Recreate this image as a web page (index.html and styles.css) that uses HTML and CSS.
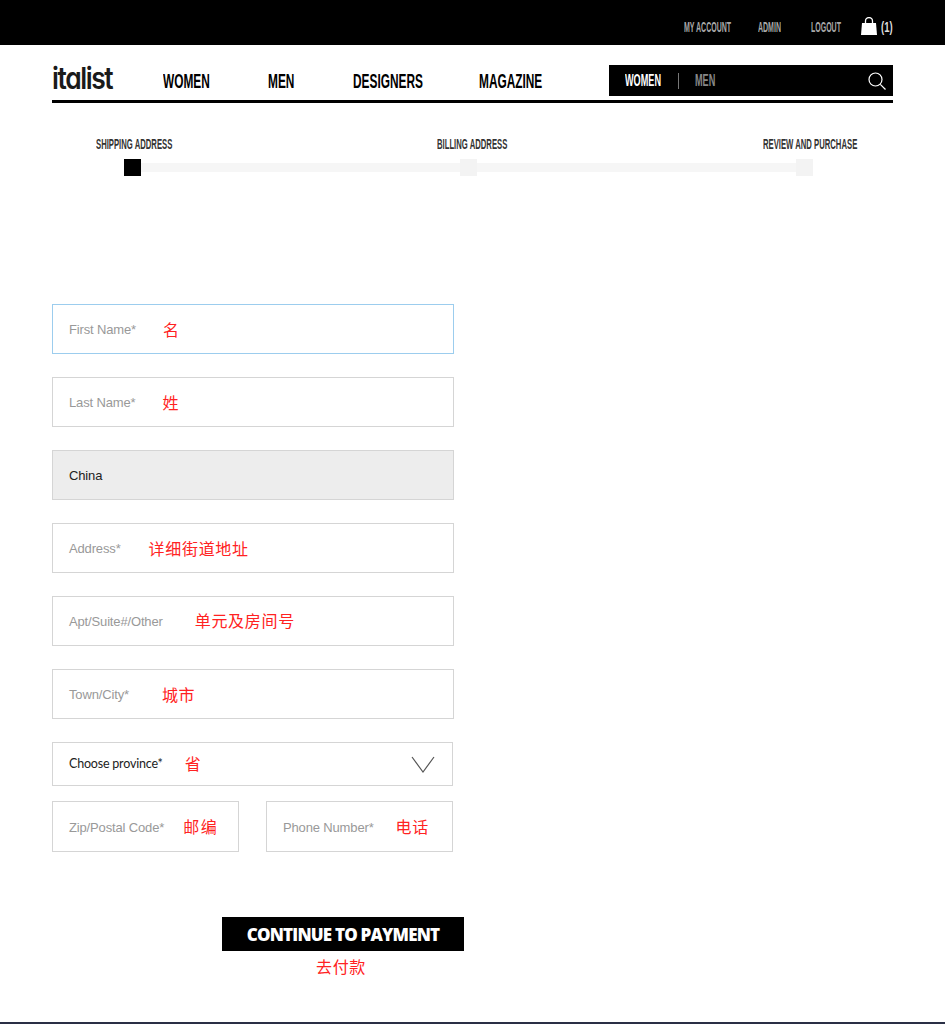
FILE: index.html
```html
<!DOCTYPE html>
<html lang="en">
<head>
    <meta charset="UTF-8">
    <meta name="viewport" content="width=device-width, initial-scale=1.0">
    <title>italist - Checkout</title>
    <link rel="stylesheet" href="styles.css">
</head>
<body>
    <div class="topbar">
        <a href="#" class="top-link">MY ACCOUNT</a>
        <a href="#" class="top-link">ADMIN</a>
        <a href="#" class="top-link">LOGOUT</a>
        <svg class="bag" width="16" height="18" viewBox="0 0 16 18">
            <path d="M1 6h14l1 12H0z" fill="#fff"/>
            <path d="M4.5 6.5V4a3.5 3.5 0 0 1 7 0v2.5" fill="none" stroke="#fff" stroke-width="1.3"/>
        </svg>
        <span class="top-link cart-count">(1)</span>
    </div>

    <header>
        <a href="#" class="logo">italist</a>
        <nav>
            <a href="#">WOMEN</a>
            <a href="#">MEN</a>
            <a href="#">DESIGNERS</a>
            <a href="#">MAGAZINE</a>
        </nav>
        <div class="search">
            <span class="search-word search-women">WOMEN</span>
            <span class="search-sep"></span>
            <span class="search-word search-men">MEN</span>
            <svg class="search-icon" width="18" height="18" viewBox="0 0 18 18">
                <circle cx="7.5" cy="7.5" r="6.5" fill="none" stroke="#fff" stroke-width="1.2"/>
                <path d="M12.3 12.3L17.5 17.5" stroke="#fff" stroke-width="1.2"/>
            </svg>
        </div>
    </header>

    <div class="steps">
        <div class="step-labels">
            <span>SHIPPING ADDRESS</span>
            <span>BILLING ADDRESS</span>
            <span>REVIEW AND PURCHASE</span>
        </div>
        <div class="track">
            <span class="dot active"></span>
            <span class="dot"></span>
            <span class="dot"></span>
        </div>
    </div>

    <main>
        <form class="address-form">
            <div class="field focused"><span class="label">First Name*</span><span class="note">名</span></div>
            <div class="field"><span class="label">Last Name*</span><span class="note">姓</span></div>
            <div class="field disabled"><span class="label">China</span></div>
            <div class="field"><span class="label">Address*</span><span class="note note-mid">详细街道地址</span></div>
            <div class="field"><span class="label">Apt/Suite#/Other</span><span class="note note-apt">单元及房间号</span></div>
            <div class="field"><span class="label">Town/City*</span><span class="note note-wide">城市</span></div>
            <div class="field select">
                <span class="label">Choose province*</span><span class="note note-tight">省</span>
                <svg class="chevron" width="24" height="17" viewBox="0 0 24 17">
                    <path d="M1 1l11 15L23 1" fill="none" stroke="#555" stroke-width="1.2"/>
                </svg>
            </div>
            <div class="field-row">
                <div class="field short"><span class="label">Zip/Postal Code*</span><span class="note note-zip">邮编</span></div>
                <div class="field short"><span class="label">Phone Number*</span><span class="note note-tight">电话</span></div>
            </div>
            <div class="submit">
                <button type="button">CONTINUE TO PAYMENT</button>
                <span class="note submit-note">去付款</span>
            </div>
        </form>
    </main>

    <footer></footer>
</body>
</html>
```

FILE: styles.css
```css
* {
    margin: 0;
    padding: 0;
    box-sizing: border-box;
}

body {
    font-family: 'Liberation Sans', Arial, sans-serif;
    background: #fff;
    color: #000;
    height: 1024px;
    overflow: hidden;
    display: flex;
    flex-direction: column;
}

a {
    color: inherit;
    text-decoration: none;
}

/* no condensed face is installed, so the display text is squeezed */
.top-link,
nav a,
.search-word,
.step-labels span {
    display: inline-block;
    font-weight: bold;
    white-space: nowrap;
    transform-origin: left center;
}

.topbar {
    background: #000;
    height: 45px;
    padding: 0 52px 0 684px;
    display: grid;
    grid-template-columns: 74px 53px 50px 20px 1fr;
    align-items: center;
    color: #a8a8a8;
    font-size: 14px;
}

.top-link {
    transform: scaleX(.5);
    padding-top: 8px;
}

.bag {
    margin-top: 6px;
}

.top-link.cart-count {
    color: #ddd;
    transform: scaleX(.68);
}

header {
    margin: 0 52px;
    height: 58px;
    border-bottom: 3px solid #000;
    display: flex;
    align-items: flex-start;
    padding-top: 20px;
}

.logo {
    font-family: 'Inter', sans-serif;
    font-feature-settings: "cv11";
    font-weight: 600;
    font-size: 30px;
    line-height: 27px;
    letter-spacing: -1.6px;
    width: 111px;
    color: #1a1a1a;
    transform: scaleX(.88);
    transform-origin: left center;
}

nav {
    display: grid;
    grid-template-columns: 105px 85px 126px 130px;
    font-size: 21px;
    line-height: 32px;
}

nav a {
    transform: scaleX(.565);
}

.search {
    width: 284px;
    height: 31px;
    background: #000;
    display: grid;
    grid-template-columns: 53px 17px 1fr 18px;
    align-items: center;
    padding: 0 7px 0 16px;
    font-size: 16px;
}

.search-word {
    transform: scaleX(.57);
}

.search-women {
    color: #fff;
}

.search-sep {
    width: 1px;
    height: 16px;
    background: #777;
}

.search-men {
    color: #888;
}

.steps {
    margin: 0 52px;
    height: 201px;
    padding-top: 33px;
}

.step-labels {
    display: grid;
    grid-template-columns: 341px 326px 1fr;
    padding-left: 44px;
    font-size: 14px;
    line-height: 16px;
    color: #333;
}

.step-labels span {
    transform: scaleX(.55);
}

.track {
    margin: 7px 80px 0 72px;
    height: 17px;
    display: flex;
    justify-content: space-between;
    align-items: center;
    background: linear-gradient(#f6f6f6, #f6f6f6) center / 100% 9px no-repeat;
}

.dot {
    width: 17px;
    height: 17px;
    background: #f3f3f3;
}

.dot.active {
    background: #000;
}

main {
    margin: 0 52px;
    flex: 1;
}

.address-form {
    width: 412px;
}

.field {
    width: 402px;
    height: 50px;
    border: 1px solid #d5d5d5;
    margin-bottom: 23px;
    padding: 0 16px;
    display: flex;
    align-items: center;
    font-size: 13px;
}

.label {
    color: #999;
    margin-top: 1px;
    letter-spacing: -.15px;
    white-space: nowrap;
}

.note {
    color: #f22;
    font-family: 'Noto Sans CJK SC', sans-serif;
    font-size: 16px;
    line-height: 24px;
    margin-left: 27px;
    letter-spacing: .7px;
    white-space: nowrap;
}

.note-mid {
    margin-left: 28px;
}

.note-apt {
    margin: -2px 0 0 32px;
}

.note-wide {
    margin-left: 33px;
}

.note-tight {
    margin: -2px 0 0 22px;
}

.note-zip {
    margin: -2px 0 0 19px;
    letter-spacing: 1.5px;
}

.focused {
    border-color: #9ccdee;
}

.disabled {
    background: #ededed;
}

.disabled .label {
    color: #222;
    margin-top: 0;
}

.select {
    width: 401px;
    height: 44px;
    margin-bottom: 15px;
}

.select .label {
    color: #222;
    font-family: 'Lato', sans-serif;
    font-size: 12.5px;
    letter-spacing: -.2px;
    margin-top: -1px;
}

.chevron {
    margin-left: auto;
    margin-right: 1px;
}

.field-row {
    display: flex;
    justify-content: space-between;
    width: 401px;
}

.short {
    width: 187px;
    height: 51px;
    margin-bottom: 0;
}

.submit {
    margin: 65px 0 0 170px;
    width: 242px;
    display: flex;
    flex-direction: column;
    align-items: center;
}

.submit button {
    width: 242px;
    height: 34px;
    background: #000;
    color: #fff;
    border: none;
    font-family: 'Open Sans', sans-serif;
    font-weight: 800;
    font-size: 17px;
    letter-spacing: -.8px;
}

.submit-note {
    margin: 3px 0 0 -4px;
}

footer {
    height: 2px;
    background: #2a2f45;
}
```
